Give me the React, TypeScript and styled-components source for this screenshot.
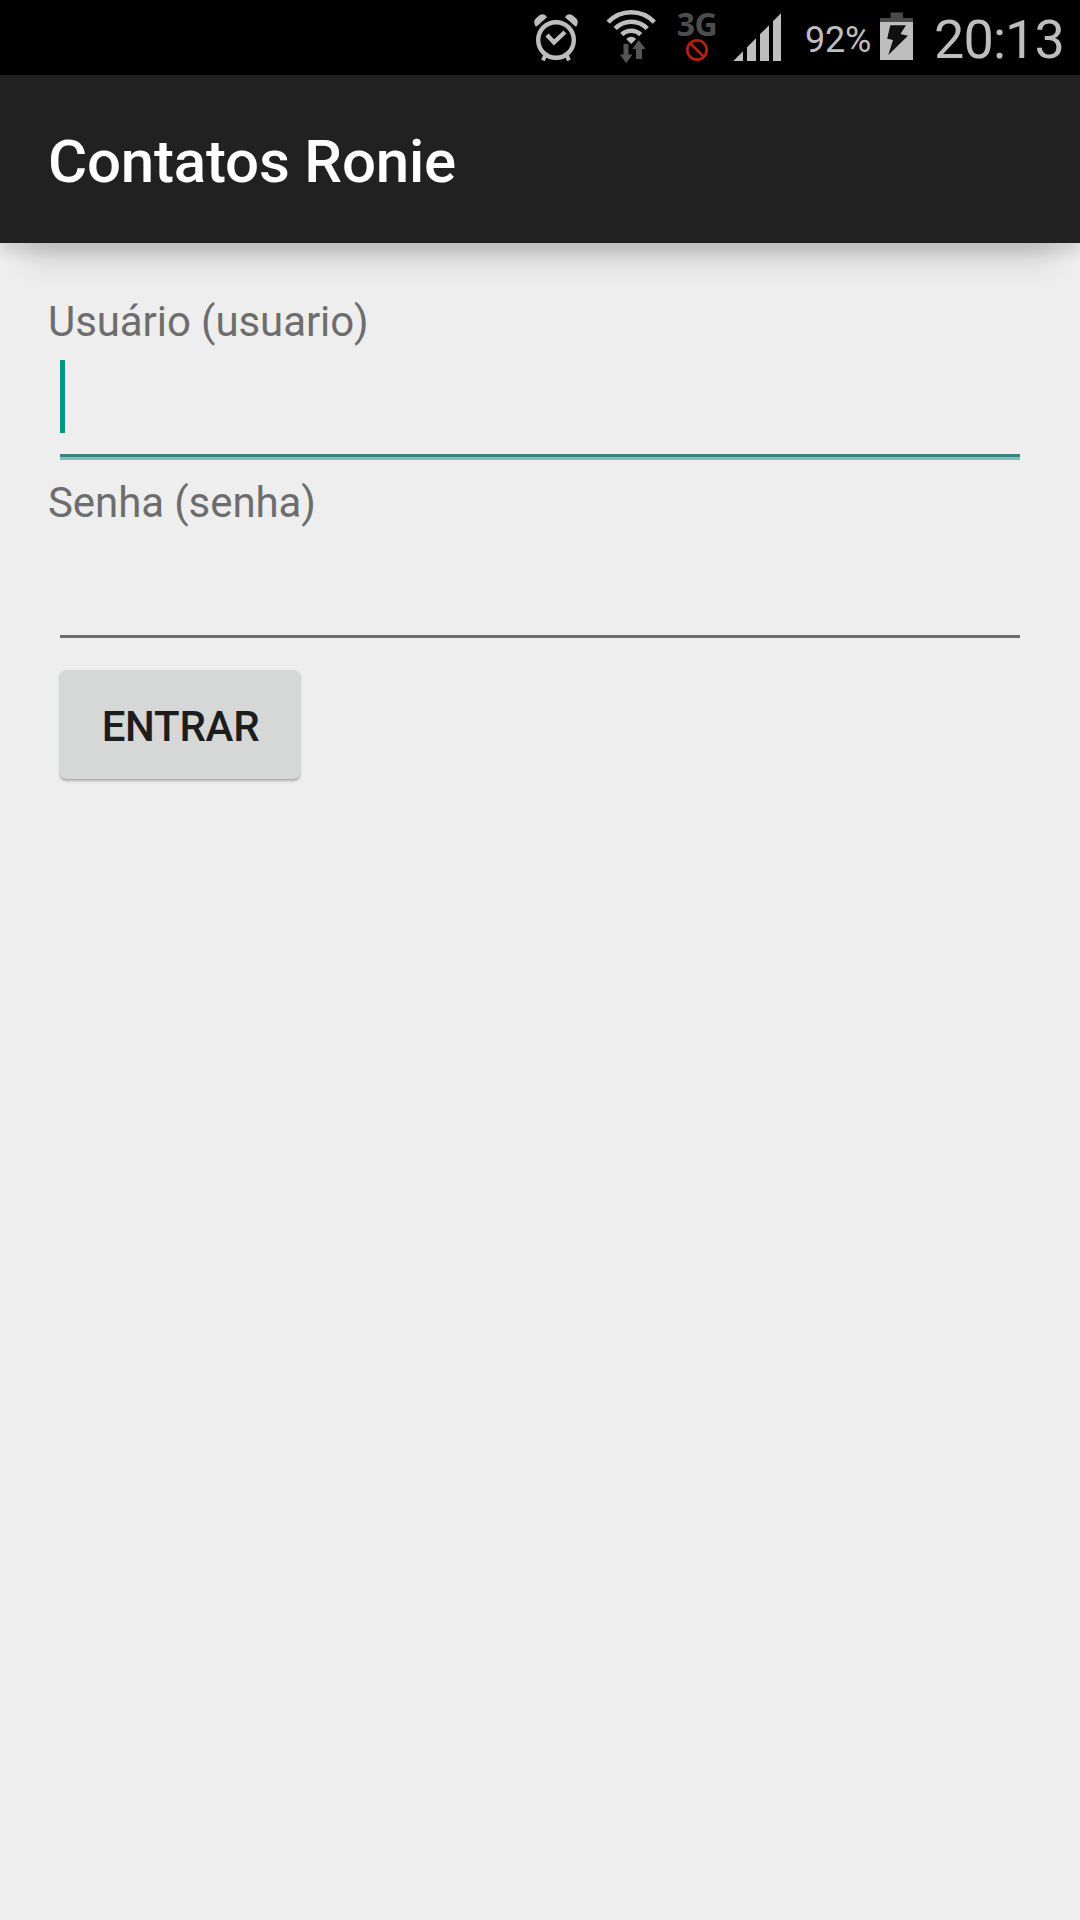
import React from "react";
import styled, { createGlobalStyle } from "styled-components";

const GlobalStyle = createGlobalStyle`
  html, body { margin: 0; padding: 0; background: #eeeeee; }
  * { box-sizing: border-box; }
`;

const Screen = styled.div`
  display: flex;
  flex-direction: column;
  width: 1080px;
  height: 1920px;
  overflow: hidden;
  background: #eeeeee;
  font-family: Roboto, "Noto Sans", sans-serif;
`;

const StatusBar = styled.header`
  display: flex;
  justify-content: flex-end;
  align-items: flex-start;
  height: 76px;
  padding-right: 16px;
  background: #000;
  border-bottom: 1px solid #211c21;
  color: #bebebe;
`;

const StatusIcon = styled.svg<{ $gap: number }>`
  display: block;
  flex: none;
  margin-right: ${(p) => p.$gap}px;
`;

const Network = styled.div`
  display: flex;
  flex-direction: column;
  align-items: center;
  width: 40px;
  margin-right: 16px;
  padding-top: 10px;
`;

const NetworkType = styled.span`
  height: 28px;
  font: 700 32px/28px "Open Sans", "Noto Sans", sans-serif;
  letter-spacing: -0.4px;
  color: #4d4d4d;
`;

const BatteryLevel = styled.span`
  width: 68px;
  margin-right: 7px;
  padding-top: 19px;
  font-size: 36px;
  line-height: 42px;
  letter-spacing: -0.2px;
`;

const Clock = styled.time`
  width: 130px;
  padding-top: 8px;
  font-size: 54px;
  line-height: 64px;
  letter-spacing: -0.9px;
  white-space: nowrap;
`;

const AppBar = styled.div`
  z-index: 1;
  display: flex;
  align-items: center;
  flex: none;
  height: 167px;
  padding: 4px 48px 0;
  background: #212121;
  box-shadow: 0 44px 28px -26px rgba(0, 0, 0, 0.12), 0 10px 12px 0 rgba(0, 0, 0, 0.11);
`;

const Title = styled.h1`
  margin: 0;
  font-size: 60px;
  font-weight: 500;
  line-height: 70px;
  letter-spacing: -0.19px;
  color: #fff;
`;

const Form = styled.form`
  display: flex;
  flex-direction: column;
  align-items: flex-start;
  padding: 48px;
`;

const Field = styled.div`
  display: flex;
  flex-direction: column;
  width: 100%;
  height: 181px;
`;

const Label = styled.label`
  height: 57px;
  padding-top: 6px;
  font-size: 42px;
  line-height: 50px;
  letter-spacing: -0.08px;
  color: #6d6d6d;
`;

const Input = styled.div<{ $focused?: boolean }>`
  display: flex;
  height: ${(p) => (p.$focused ? 112 : 109)}px;
  margin: 0 12px;
  padding-top: 12px;
  border-bottom: 3px solid ${(p) => (p.$focused ? "#78c3bb" : "#6d6d6d")};
  box-shadow: ${(p) => (p.$focused ? "inset 0 -3px 0 #38857d" : "none")};
`;

const Caret = styled.span`
  width: 5px;
  height: 73px;
  background: #009688;
`;

const Button = styled.button`
  width: 240px;
  height: 109px;
  margin: 17px 0 0 12px;
  padding: 4px 0 0 1px;
  border: 0;
  border-radius: 6px;
  background: #d6d7d7;
  box-shadow: 0 2px 3px rgba(0, 0, 0, 0.24), 0 1px 2px rgba(0, 0, 0, 0.1);
  color: #1d1d1d;
  font: 500 42px/50px Roboto, sans-serif;
  letter-spacing: -0.25px;
`;

const AlarmIcon = () => (
  <StatusIcon $gap={25} width="48" height="76" viewBox="532 0 48 76">
    <g fill="none" stroke="#bebebe">
      <circle cx="556" cy="40" r="17.8" strokeWidth="4.4" />
      <path d="M547 35l7 7.3 11-10.3" strokeWidth="4.4" />
      <path d="M545.4 55l-2.4 5.3M566.6 55l2.4 5.3" strokeWidth="4" />
    </g>
    <path
      fill="#bebebe"
      d="M535.6 26.5C533.6 23 533.8 20.5 536 18.3L539.5 15.3C542 13.6 545 14 547 17.2L536.9 26.3ZM576.4 26.5C578.4 23 578.2 20.5 576 18.3L572.5 15.3C570 13.6 567 14 565 17.2L575.1 26.3Z"
    />
  </StatusIcon>
);

const WifiIcon = () => (
  <StatusIcon $gap={20} width="52" height="76" viewBox="605 0 52 76">
    <g fill="none" stroke="#bebebe" strokeWidth="4.6">
      <path d="M608.1 22.2A31.7 31.7 0 0 1 654.3 22.2" />
      <path d="M615.2 28.5A22.2 22.2 0 0 1 647.2 28.5" />
      <path d="M621.8 34.7A13.2 13.2 0 0 1 640.6 34.7" />
    </g>
    <path fill="#bebebe" d="M631.2 44L626.2 39Q631.2 34.6 636.2 39Z" />
    <path
      fill="#555"
      d="M623.5 44H628.5V54.5H632.7L626.2 63L619.7 54.5H623.5ZM638.7 40L645.6 49H642V59H636V49H632.3Z"
    />
  </StatusIcon>
);

const BlockedIcon = () => (
  <svg width="24" height="24" viewBox="685 38 24 24">
    <g fill="none" stroke="#b5200f" strokeWidth="2.7">
      <circle cx="697" cy="50" r="9.7" />
      <path d="M690.2 43.2L703.8 56.8" />
    </g>
  </svg>
);

const SignalIcon = () => (
  <StatusIcon $gap={24} width="48" height="76" viewBox="733 0 48 76">
    <path
      fill="#bebebe"
      d="M733.3 61L743 51.3V61ZM747 61V47.3L756 38.3V61ZM760 61V34.3L769 25.3V61ZM773 61V21.3L781 13.3V61Z"
    />
  </StatusIcon>
);

const BatteryIcon = () => (
  <StatusIcon $gap={21} width="33" height="76" viewBox="880 0 33 76">
    <path fill="#4a4a4a" d="M890.6 12.4H903V18H913V22H880V18H890.6Z" />
    <path fill="#bebebe" d="M880 22H913V60H880Z" />
    <path fill="#111" d="M890.3 25.3H906L900.5 34L908 35.8L888.3 55L893 40L887.2 38.7Z" />
  </StatusIcon>
);

export default function App() {
  return (
    <>
      <GlobalStyle />
      <Screen>
        <StatusBar>
          <AlarmIcon />
          <WifiIcon />
          <Network>
            <NetworkType>3G</NetworkType>
            <BlockedIcon />
          </Network>
          <SignalIcon />
          <BatteryLevel>92%</BatteryLevel>
          <BatteryIcon />
          <Clock>20:13</Clock>
        </StatusBar>
        <AppBar>
          <Title>Contatos Ronie</Title>
        </AppBar>
        <Form>
          <Field>
            <Label>Usuário (usuario)</Label>
            <Input $focused>
              <Caret />
            </Input>
          </Field>
          <Field>
            <Label>Senha (senha)</Label>
            <Input />
          </Field>
          <Button type="button">ENTRAR</Button>
        </Form>
      </Screen>
    </>
  );
}
